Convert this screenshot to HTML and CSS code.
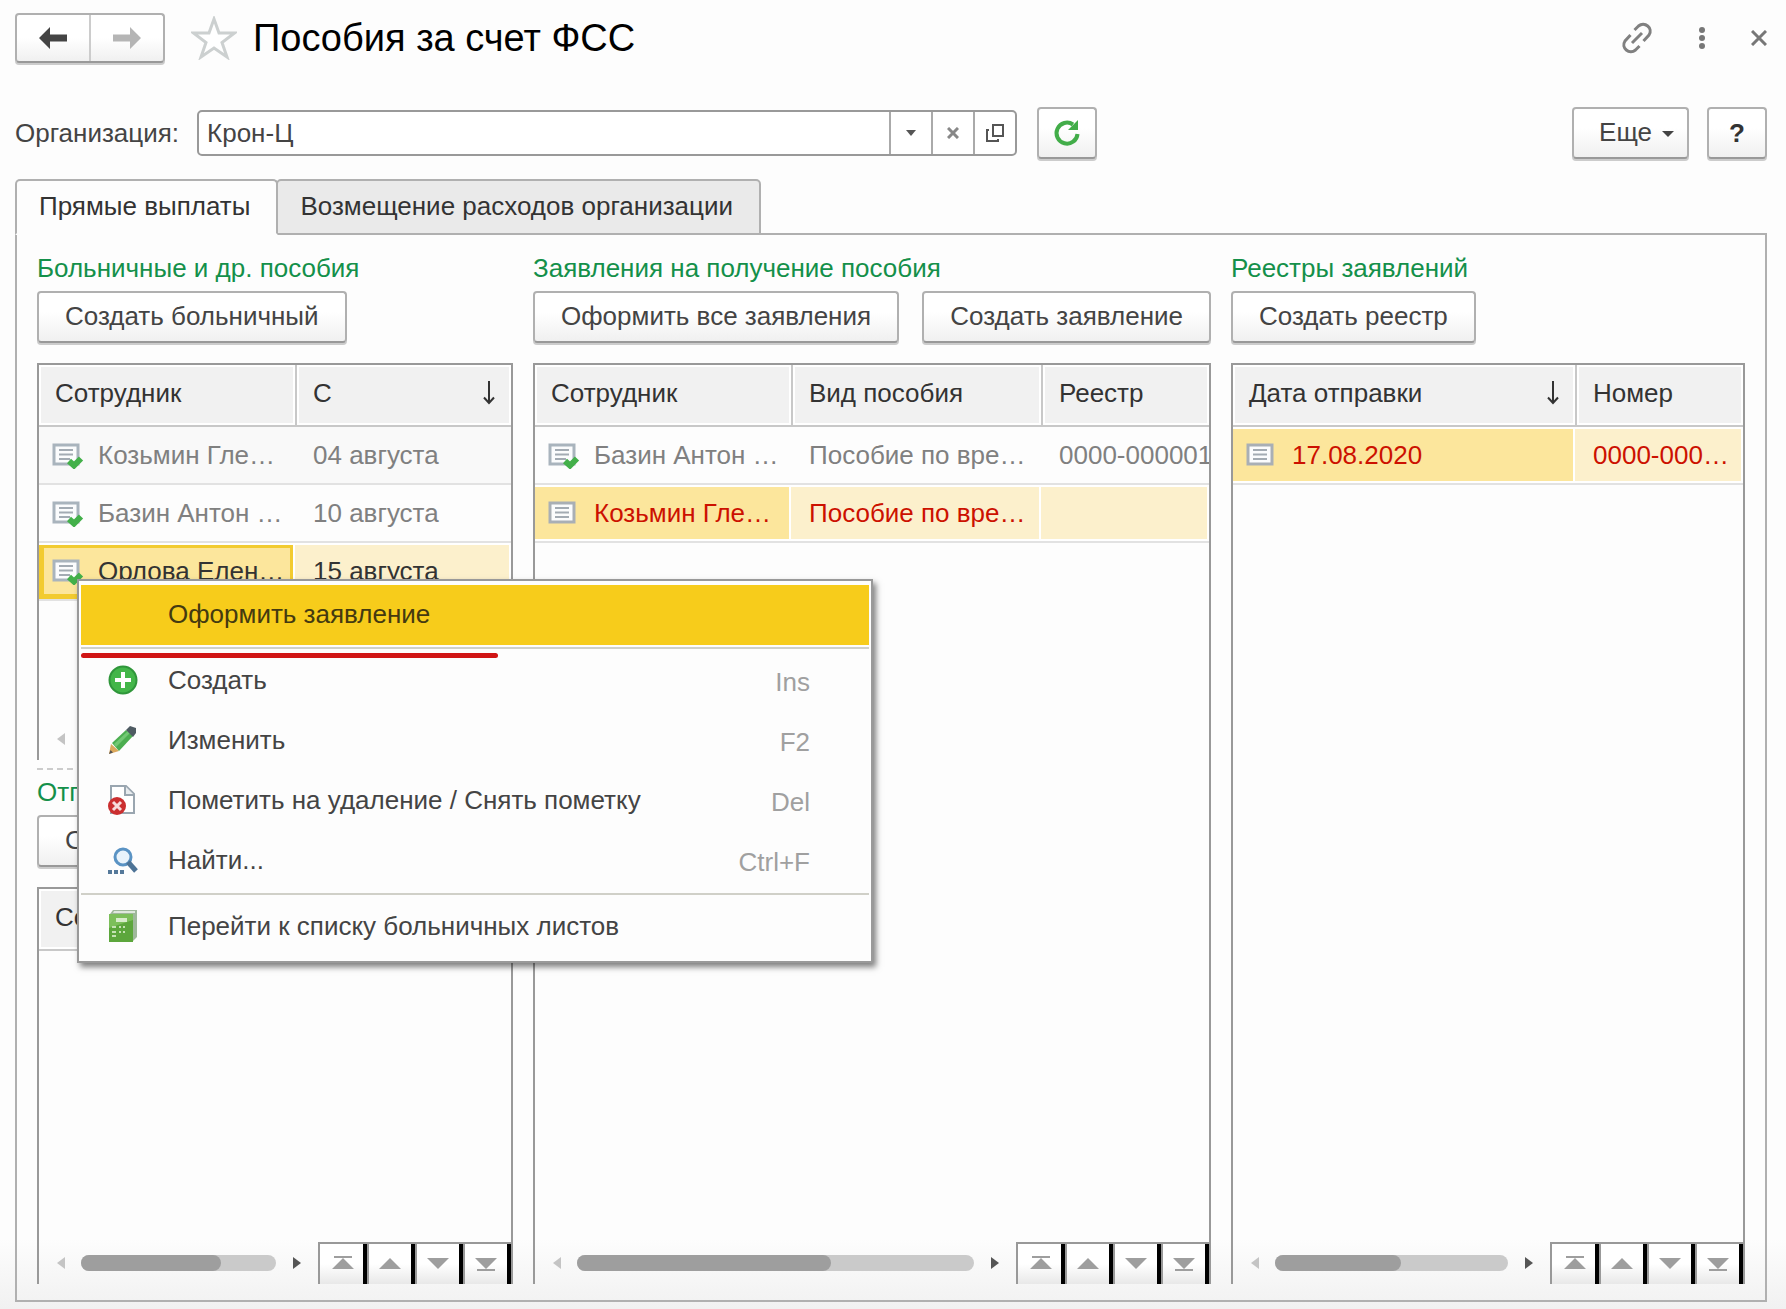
FILE: index.html
```html
<!DOCTYPE html>
<html lang="ru">
<head>
    <meta charset="UTF-8">
    <meta name="viewport" content="width=device-width, initial-scale=1.0">
    <title>Пособия за счет ФСС</title>
    <link rel="stylesheet" href="styles.css">
</head>
<body>
    <!-- Shared icons -->
    <svg class="sprite" aria-hidden="true">
        <symbol id="doc" viewBox="0 0 32 26">
            <rect x="2" y="2" width="24" height="19" fill="#fbfcfd" stroke="#a9afb5" stroke-width="3"/>
            <path d="M7 7h14M7 11.500h14M7 16h14" stroke="#a3abb3" stroke-width="2"/>
        </symbol>
        <symbol id="doc-ok" viewBox="0 0 32 26">
            <rect x="2" y="2" width="24" height="19" fill="#fbfcfd" stroke="#a9b4bd" stroke-width="3"/>
            <path d="M7 7h14M7 11.500h14M7 16h11" stroke="#a3abb3" stroke-width="2"/>
            <path d="M17 18l5 4.500 7-7" fill="none" stroke="#43b04a" stroke-width="6"/>
        </symbol>
        <symbol id="sort" viewBox="0 0 12 24">
            <path d="M6 0v22M1 16.500l5 5.500 5-5.500" fill="none" stroke="#333" stroke-width="2"/>
        </symbol>
        <symbol id="left" viewBox="0 0 8 12"><path d="M8 0v12L0 6z"/></symbol>
        <symbol id="right" viewBox="0 0 8 12"><path d="M0 0v12l8-6z"/></symbol>
        <symbol id="first" viewBox="0 0 22 16"><path d="M2 0h18v2H2zM11 2l11 11H0z"/></symbol>
        <symbol id="up" viewBox="0 0 22 16"><path d="M11 2l11 11H0z"/></symbol>
        <symbol id="down" viewBox="0 0 22 16"><path d="M0 2h22L11 13z"/></symbol>
        <symbol id="last" viewBox="0 0 22 16"><path d="M0 2h22L11 13zM2 13h18v2H2z"/></symbol>
    </svg>

    <div class="header">
        <div class="nav">
            <button class="nav-btn" aria-label="Назад">
                <svg width="28" height="28" viewBox="0 0 28 28"><path d="M0 14L11 3v7.500h17v7H11V25z" fill="#444"/></svg>
            </button>
            <button class="nav-btn" aria-label="Вперед">
                <svg width="28" height="28" viewBox="0 0 28 28"><path d="M28 14L17 3v7.500H0v7h17V25z" fill="#b5b5b5"/></svg>
            </button>
        </div>
        <button class="icon-btn star" aria-label="В избранное">
            <svg width="46" height="44" viewBox="0 0 46 44"><path d="M23 3l5 14h15.500L31 26.500 36 41l-13-9-13 9 5-14.500L2.500 17H18z" fill="#fff" stroke="#ccd0d0" stroke-width="3"/></svg>
        </button>
        <h1>Пособия за счет ФСС</h1>
        <div class="window-tools">
            <button class="icon-btn" aria-label="Ссылка">
                <svg width="32" height="32" viewBox="0 0 32 32" fill="none" stroke="#808080" stroke-width="3"><path d="M13.500 8l4-4c6-5 15 2 10.500 9l-5.500 6M18.500 24l-4 4c-6 5-15-2-10.500-9l5.500-6M11 21l10-10"/></svg>
            </button>
            <button class="icon-btn" aria-label="Меню">
                <svg width="8" height="24" viewBox="0 0 8 24" fill="#777"><circle cx="4" cy="4" r="3"/><circle cx="4" cy="12" r="3"/><circle cx="4" cy="20" r="3"/></svg>
            </button>
            <button class="icon-btn" aria-label="Закрыть">
                <svg width="16" height="16" viewBox="0 0 16 16" stroke="#777" stroke-width="3"><path d="M1 1l14 14M15 1L1 15"/></svg>
            </button>
        </div>
    </div>

    <div class="toolbar">
        <label for="org">Организация:</label>
        <div class="field">
            <input type="text" id="org" value="Крон-Ц">
            <button aria-label="Выбрать"><svg width="10" height="6" viewBox="0 0 10 6"><path d="M0 0h10L5 6z" fill="#555"/></svg></button>
            <button aria-label="Очистить"><svg width="12" height="12" viewBox="0 0 12 12" stroke="#888" stroke-width="3"><path d="M1 1l10 10M11 1L1 11"/></svg></button>
            <button aria-label="Открыть"><svg width="20" height="20" viewBox="0 0 20 20" fill="none" stroke="#555" stroke-width="2"><path d="M8 2h10v11H8zM4 7H2v11h11v-2"/></svg></button>
        </div>
        <button class="btn square" aria-label="Обновить">
            <svg width="28" height="28" viewBox="0 0 28 28"><path d="M24.500 15A10.500 10.500 0 1 1 20 5.500" fill="none" stroke="#42ad49" stroke-width="4"/><path d="M25 1v10H15z" fill="#42ad49"/></svg>
        </button>
        <button class="btn more">Еще <svg width="12" height="10" viewBox="0 0 12 10"><path d="M0 4h12L6 10z" fill="#444"/></svg></button>
        <button class="btn square help">?</button>
    </div>

    <div class="tabs">
        <button class="tab active">Прямые выплаты</button>
        <button class="tab">Возмещение расходов организации</button>
    </div>

    <div class="panel">
        <div class="column">
            <h2>Больничные и др. пособия</h2>
            <div class="buttons"><button class="btn">Создать больничный</button></div>
            <div class="list">
                <table>
                    <thead>
                        <tr><th class="w-name">Сотрудник</th><th><div class="cell">С <svg class="sort"><use href="#sort"/></svg></div></th></tr>
                    </thead>
                    <tbody>
                        <tr class="odd"><td><div class="cell"><svg class="doc"><use href="#doc-ok"/></svg>Козьмин Гле…</div></td><td>04 августа</td></tr>
                        <tr><td><div class="cell"><svg class="doc"><use href="#doc-ok"/></svg>Базин Антон …</div></td><td>10 августа</td></tr>
                        <tr class="selected"><td class="focus"><div class="cell"><svg class="doc"><use href="#doc-ok"/></svg>Орлова Елен…</div></td><td>15 августа</td></tr>
                    </tbody>
                </table>
                <div class="list-footer">
                    <svg class="arrow off"><use href="#left"/></svg>
                    <div class="track"><div class="thumb thumb-1"></div></div>
                    <svg class="arrow"><use href="#right"/></svg>
                </div>
            </div>

            <div class="splitter"></div>

            <h2>Отпуска по уходу</h2>
            <div class="buttons"><button class="btn">Создать отпуск</button></div>
            <div class="list">
                <table>
                    <thead>
                        <tr><th class="w-name">Сотрудник</th><th>С</th></tr>
                    </thead>
                </table>
                <div class="list-footer">
                    <svg class="arrow off"><use href="#left"/></svg>
                    <div class="track"><div class="thumb thumb-1"></div></div>
                    <svg class="arrow"><use href="#right"/></svg>
                    <div class="pager">
                        <button aria-label="В начало"><svg><use href="#first"/></svg></button>
                        <button aria-label="Вверх"><svg><use href="#up"/></svg></button>
                        <button aria-label="Вниз"><svg><use href="#down"/></svg></button>
                        <button aria-label="В конец"><svg><use href="#last"/></svg></button>
                    </div>
                </div>
            </div>

            <!-- Context menu of the selected row -->
            <div class="menu">
                <button class="menu-item current"><span class="menu-icon"></span>Оформить заявление</button>
                <div class="menu-line"></div>
                <div class="underline"></div>
                <button class="menu-item">
                    <span class="menu-icon"><svg width="30" height="30" viewBox="0 0 30 30"><circle cx="15" cy="15" r="13.500" fill="#43b649" stroke="#2f963a" stroke-width="2"/><path d="M15 7v16M7 15h16" stroke="#fff" stroke-width="4"/></svg></span>
                    Создать <kbd>Ins</kbd>
                </button>
                <button class="menu-item">
                    <span class="menu-icon"><svg width="30" height="30" viewBox="0 0 30 30"><path d="M3 19l8 7-10 3z" fill="#dca85c"/><path d="M4 18L18 5l7 6-14 15z" fill="#4cae50"/><path d="M6 19L20 6l2 2L8 22z" fill="#72c873"/><path d="M18 5l4-4 6 2v5l-3 4z" fill="#4e5b62"/><path d="M1 29l1.500-4 2.500 2.500z" fill="#555"/></svg></span>
                    Изменить <kbd>F2</kbd>
                </button>
                <button class="menu-item">
                    <span class="menu-icon"><svg width="30" height="32" viewBox="0 0 30 32"><path d="M3 2h15l8 8v19H3z" fill="#fff" stroke="#9aa6b0" stroke-width="2"/><path d="M17 2v9h9" fill="#e8ecef" stroke="#9aa6b0" stroke-width="2"/><circle cx="9" cy="22" r="9" fill="#cb2f30"/><path d="M5 18l8 8M13 18l-8 8" stroke="#f7dcdc" stroke-width="3"/></svg></span>
                    Пометить на удаление / Снять пометку <kbd>Del</kbd>
                </button>
                <button class="menu-item">
                    <span class="menu-icon"><svg width="30" height="30" viewBox="0 0 30 30"><circle cx="15" cy="12" r="8" fill="#e9f3fb" stroke="#5a93c4" stroke-width="3"/><path d="M20 17l8 9" stroke="#4d7396" stroke-width="5"/><path d="M0 25h4v4H0zM6 25h4v4H6zM12 25h4v4h-4z" fill="#55799a"/></svg></span>
                    Найти... <kbd>Ctrl+F</kbd>
                </button>
                <div class="menu-line"></div>
                <button class="menu-item">
                    <span class="menu-icon"><svg width="30" height="32" viewBox="0 0 30 32"><path d="M5 0h24v27l-4 4V4H2z" fill="#9fb89b"/><path d="M6 1h21v2H5z" fill="#dfe8dd"/><path d="M1 4h24v28H1z" fill="#5ca63c"/><path d="M1 4h24v6L1 18z" fill="#7cbf5a"/><path d="M8 8h11v4H8z" fill="#d7ecca"/><path d="M4 17h4M4 22h4M4 26h4M11 17h2M15 17h2M11 22h2M15 22h2" stroke="#c4e2b3" stroke-width="2"/></svg></span>
                    Перейти к списку больничных листов
                </button>
            </div>
        </div>

        <div class="column">
            <h2>Заявления на получение пособия</h2>
            <div class="buttons">
                <button class="btn">Оформить все заявления</button>
                <button class="btn">Создать заявление</button>
            </div>
            <div class="list">
                <table>
                    <thead>
                        <tr><th class="w-name">Сотрудник</th><th class="w-kind">Вид пособия</th><th>Реестр</th></tr>
                    </thead>
                    <tbody>
                        <tr><td><div class="cell"><svg class="doc"><use href="#doc-ok"/></svg>Базин Антон …</div></td><td>Пособие по вре…</td><td>0000-000001</td></tr>
                        <tr class="selected red"><td class="main"><div class="cell"><svg class="doc"><use href="#doc"/></svg>Козьмин Гле…</div></td><td>Пособие по вре…</td><td></td></tr>
                    </tbody>
                </table>
                <div class="list-footer">
                    <svg class="arrow off"><use href="#left"/></svg>
                    <div class="track"><div class="thumb thumb-2"></div></div>
                    <svg class="arrow"><use href="#right"/></svg>
                    <div class="pager">
                        <button aria-label="В начало"><svg><use href="#first"/></svg></button>
                        <button aria-label="Вверх"><svg><use href="#up"/></svg></button>
                        <button aria-label="Вниз"><svg><use href="#down"/></svg></button>
                        <button aria-label="В конец"><svg><use href="#last"/></svg></button>
                    </div>
                </div>
            </div>
        </div>

        <div class="column">
            <h2>Реестры заявлений</h2>
            <div class="buttons"><button class="btn">Создать реестр</button></div>
            <div class="list">
                <table>
                    <thead>
                        <tr><th class="w-date"><div class="cell">Дата отправки <svg class="sort"><use href="#sort"/></svg></div></th><th>Номер</th></tr>
                    </thead>
                    <tbody>
                        <tr class="selected red"><td class="main"><div class="cell"><svg class="doc"><use href="#doc"/></svg>17.08.2020</div></td><td>0000-000…</td></tr>
                    </tbody>
                </table>
                <div class="list-footer">
                    <svg class="arrow off"><use href="#left"/></svg>
                    <div class="track"><div class="thumb thumb-3"></div></div>
                    <svg class="arrow"><use href="#right"/></svg>
                    <div class="pager">
                        <button aria-label="В начало"><svg><use href="#first"/></svg></button>
                        <button aria-label="Вверх"><svg><use href="#up"/></svg></button>
                        <button aria-label="Вниз"><svg><use href="#down"/></svg></button>
                        <button aria-label="В конец"><svg><use href="#last"/></svg></button>
                    </div>
                </div>
            </div>
        </div>
    </div>
</body>
</html>
```
FILE: styles.css
```css
* {
    box-sizing: border-box;
}

body {
    display: flex;
    flex-direction: column;
    min-height: 100vh;
    margin: 0;
    padding: 13px 19px 7px 15px;
    font: 26px/30px "Liberation Sans", Arial, sans-serif;
    color: #444;
    background: linear-gradient(to top, #f1f1f1, #fdfdfd 70px);
}

button, input {
    font: inherit;
    color: inherit;
}

button {
    padding: 0;
    border: none;
    background: none;
    cursor: pointer;
}

svg {
    display: block;
    flex: none;
}

.sprite {
    position: absolute;
    width: 0;
    height: 0;
}

/* Header */
.header {
    display: flex;
    align-items: center;
    height: 50px;
}

.nav {
    display: flex;
    width: 150px;
    height: 50px;
    border: 2px solid #b0b0b0;
    border-bottom-color: #999;
    border-radius: 4px;
    background: linear-gradient(#fff 50%, #f0f0f0);
    box-shadow: 0 2px 0 #ccc;
}

.nav-btn {
    display: flex;
    flex: 1;
    align-items: center;
    justify-content: center;
}

.nav-btn + .nav-btn {
    border-left: 2px solid #ccc;
}

.star {
    margin: 0 16px 0 26px;
}

h1 {
    margin: 0;
    font-size: 38px;
    line-height: 44px;
    font-weight: normal;
    color: #000;
}

.window-tools {
    display: flex;
    align-items: center;
    gap: 45px;
    margin-left: auto;
}

/* Organization row */
.toolbar {
    display: flex;
    align-items: center;
    margin-top: 44px;
}

.field {
    display: flex;
    width: 820px;
    height: 46px;
    margin: 0 20px 0 18px;
    border: 2px solid #999;
    border-radius: 5px;
    background: #fff;
}

.field input {
    flex: 1;
    min-width: 0;
    padding: 0 8px;
    border: none;
    outline: none;
    background: none;
}

.field button {
    display: flex;
    align-items: center;
    justify-content: center;
    width: 42px;
    border-left: 2px solid #aaa;
}

.btn {
    height: 52px;
    padding: 0 26px 2px;
    border: 2px solid #b0b0b0;
    border-bottom-color: #999;
    border-radius: 4px;
    background: linear-gradient(#fff 40%, #f0f0f0);
    box-shadow: 0 2px 0 #ccc;
    white-space: nowrap;
}

.square {
    display: flex;
    align-items: center;
    justify-content: center;
    width: 60px;
    padding: 0;
}

.more {
    display: flex;
    align-items: center;
    gap: 10px;
    margin: 0 18px 0 auto;
    padding: 0 13px 2px 25px;
}

.help {
    font-weight: bold;
    color: #333;
}

/* Tabs */
.tabs {
    display: flex;
    margin-top: 20px;
}

.tab {
    height: 56px;
    padding: 0 26px 2px 22px;
    border: 2px solid #b0b0b0;
    border-radius: 5px 5px 0 0;
    background: #eaeaea;
    color: #333;
}

.tab.active {
    z-index: 1;
    margin-right: -2px;
    border-bottom-color: #fdfdfd;
    background: #fdfdfd;
}

.panel {
    display: grid;
    flex: 1;
    grid-template-columns: 476fr 678fr 514fr;
    gap: 20px;
    margin-top: -2px;
    padding: 18px 20px 16px;
    border: 2px solid #b0b0b0;
}

.column {
    position: relative;
    display: flex;
    flex-direction: column;
    min-width: 0;
}

h2 {
    margin: 0 0 8px;
    font-size: 26px;
    line-height: 30px;
    font-weight: normal;
    color: #14904a;
}

.buttons {
    display: flex;
    justify-content: space-between;
    margin-bottom: 20px;
}

.splitter {
    margin: 8px 0 7px;
    border-top: 2px dashed #ccc;
}

/* Lists */
.list {
    display: flex;
    flex: 1;
    flex-direction: column;
    border: 2px solid #999;
    border-bottom: none;
    overflow: hidden;
}

table {
    width: 100%;
    table-layout: fixed;
    border-collapse: separate;
    border-spacing: 0;
}

th, td {
    padding: 0 0 0 16px;
    border-bottom: 2px solid #e2e2e2;
    font-weight: normal;
    text-align: left;
    white-space: nowrap;
    overflow: hidden;
}

th {
    height: 62px;
    padding-bottom: 4px;
    border-bottom-color: #c8c8c8;
    background: #f1f1f1;
    box-shadow: inset 0 0 0 2px #fff;
    color: #333;
}

th + th {
    border-left: 2px solid #c8c8c8;
    padding-left: 16px;
}

td {
    height: 58px;
    color: #808080;
}

td + td {
    padding-left: 18px;
}

.w-name {
    width: 256px;
}

.w-kind {
    width: 250px;
}

.w-date {
    width: 342px;
}

.cell {
    display: flex;
    align-items: center;
}

.doc {
    width: 32px;
    height: 26px;
    margin: 2px 14px 0 -3px;
}

.sort {
    width: 12px;
    height: 24px;
    margin: 0 16px 0 auto;
}

.odd td {
    background: #f9f9f9;
}

.selected td {
    background: #fcf0cc;
    box-shadow: inset 0 2px #fff, inset 0 -2px #fff, inset -2px 0 #fff;
    color: #333;
}

.selected .main {
    background: #fce69c;
}

.selected .focus {
    background: #fce69c;
    box-shadow: inset 0 2px #fff, inset -2px 0 #fff, inset 0 0 0 5px #f2cb30;
}

.selected.red td {
    color: #cc1100;
}

.list-footer {
    display: flex;
    align-items: center;
    height: 42px;
    margin-top: auto;
    padding-left: 18px;
}

.arrow {
    width: 8px;
    height: 12px;
    fill: #555;
}

.arrow.off {
    fill: #c4c4c4;
}

.track {
    flex: 1;
    height: 16px;
    margin: 0 17px 0 16px;
    border-radius: 8px;
    background: #cacaca;
}

.thumb {
    height: 100%;
    border-radius: 8px;
    background: #9e9e9e;
}

.thumb-1 {
    width: 72%;
}

.thumb-2 {
    width: 64%;
}

.thumb-3 {
    width: 54%;
}

.pager {
    display: flex;
    align-self: stretch;
    margin-left: 17px;
    border-top: 2px solid #999;
    border-left: 2px solid #999;
    background: linear-gradient(#fff 50%, #e8e8e8);
}

.pager button {
    width: 48px;
    padding-left: 12px;
    border-right: 4px solid #000;
}

.pager button:first-child {
    width: 47px;
}

.pager button + button {
    border-left: 2px solid #999;
    padding-left: 10px;
}

.pager svg {
    width: 22px;
    height: 16px;
    fill: #9e9e9e;
}

/* Context menu */
.menu {
    position: absolute;
    top: 326px;
    left: 40px;
    z-index: 2;
    width: 796px;
    padding: 4px 2px;
    border: 2px solid #999;
    background: #fdfdfd;
    box-shadow: 3px 4px 6px rgba(0, 0, 0, 0.5);
}

.menu-item {
    display: flex;
    align-items: center;
    width: 100%;
    height: 60px;
    padding: 0 59px 3px 27px;
    text-align: left;
}

.menu-item.current {
    background: #f7cc1b;
    color: #443a10;
}

.menu-icon {
    width: 60px;
}

.menu-line {
    margin: 2px 0;
    border-top: 2px solid #d0d0c8;
}

/* Red marker line under the first item */
.underline {
    position: absolute;
    top: 72px;
    left: 2px;
    width: 417px;
    height: 5px;
    border-radius: 3px;
    background: #d01515;
}

kbd {
    margin-left: auto;
    padding-top: 4px;
    font: inherit;
    color: #a0a0a0;
}
```
